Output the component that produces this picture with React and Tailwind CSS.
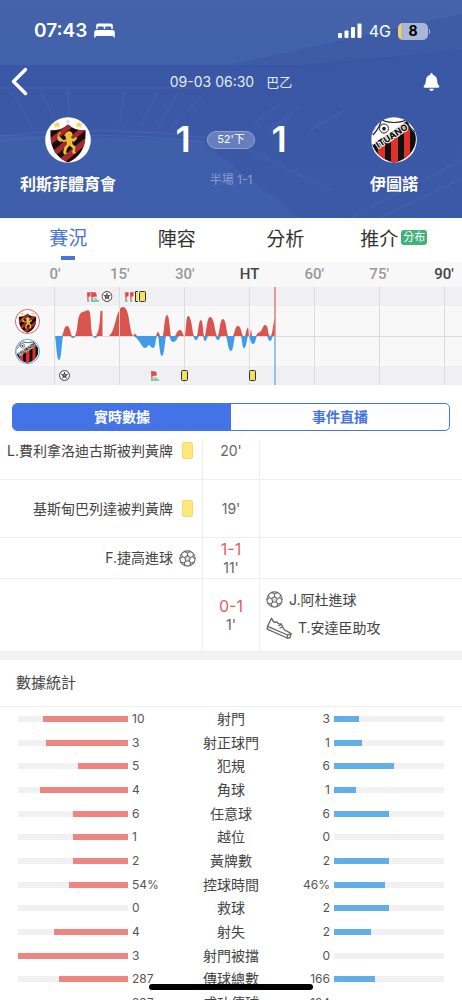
import React from "react";
import { FaBell } from "react-icons/fa";

const STATS = [
  ["10", "射門", "3", 77, 23],
  ["3", "射正球門", "1", 75, 25],
  ["5", "犯規", "6", 45.5, 54.5],
  ["4", "角球", "1", 80, 20],
  ["6", "任意球", "6", 50, 50],
  ["1", "越位", "0", 50, 0],
  ["2", "黃牌數", "2", 50, 50],
  ["54%", "控球時間", "46%", 54, 46],
  ["0", "救球", "2", 0, 50],
  ["4", "射失", "2", 67, 33.5],
  ["3", "射門被擋", "0", 100, 0],
  ["287", "傳球總數", "166", 63, 37],
  ["237", "成功傳球", "124", 65, 35],
];

// Each hump is [start, end, peak x, peak y] around the zero line at y = 49.
const HUMPS_HOME = [
  [8, 18, 13, 39], [79, 83, 81, 47], [102, 106, 104, 45],
  [109, 117, 113, 28], [121, 130, 126, 43], [131, 140, 134, 29],
  [143, 150, 147, 33], [151, 163, 156, 30], [164, 174, 169, 32],
  [179, 189, 184, 39], [191, 195, 194, 41], [196, 198, 197, 43],
];
const HUMPS_AWAY = [
  [1, 9, 5, 73], [16, 22, 19, 51], [39, 44, 41, 51],
  [104, 112, 108, 69], [115, 125, 119, 55], [139, 145, 142, 53],
  [149, 154, 151, 54], [161, 167, 164, 53], [172, 181, 177, 64],
  [187, 194, 190, 61], [195, 203, 199, 57], [213, 219, 216, 54],
];

function hump([a, b, p, y]) {
  const shoulder = 49 - (49 - y) * 0.3;
  return `M${a} 49C${a + (p - a) * 0.35} ${shoulder} ${p - (p - a) * 0.6} ${y} ${p} ${y}C${p + (b - p) * 0.6} ${y} ${b - (b - p) * 0.35} ${shoulder} ${b} 49Z`;
}

function Ball({ dark, ...props }) {
  return (
    <svg viewBox="0 0 24 24" fill="none" stroke={dark ? "#2c2c2c" : "#666"} strokeWidth={dark ? 2 : 1.5} strokeLinejoin="round" {...props}>
      <circle cx="12" cy="12" r="10.8" fill="#fff" />
      <path d="M12 7.8L16 10.7L14.5 15.4H9.5L8 10.7Z" fill={dark ? "#888" : "#ddd"} />
      <path d="M12 7.8V4.4M16 10.7L19.4 9.4M14.5 15.4L16.6 18.4M9.5 15.4L7.4 18.4M8 10.7L4.6 9.4" />
      {dark ? null : (
        <path d="M7.6 2.2L12 4.4L16.4 2.2M20.6 5.4L19.4 9.4L22.8 12.4M21.2 17.4L16.6 18.4L15.2 22.3M8.8 22.3L7.4 18.4L2.8 17.4M1.2 12.4L4.6 9.4L3.4 5.4" />
      )}
    </svg>
  );
}

function Shoe() {
  return (
    <svg viewBox="0 0 26 22" className="h-[22px] w-[26px] shrink-0" fill="none" stroke="#666" strokeWidth="1.3" strokeLinejoin="round" strokeLinecap="round">
      <path d="M5.4 1.2L1.6 9.3L1.2 12.2L21.2 21L24 20.8L25 16.8C22.6 14.2 19.6 14.4 17.6 11.8L15.2 6.8C13.6 7.2 11.8 6.8 11 5L8.2 5.4C6.8 4.6 6.6 2.6 5.4 1.2Z" />
      <path d="M1.6 9.3L21.6 18L25 16.8M21.6 18L21.2 21M15.4 7.6L12.8 8.6M16.6 10L14 11" />
    </svg>
  );
}

function Bed() {
  return (
    <svg viewBox="0 0 21 15" className="h-[15px] w-[21px]" fill="#fff" aria-hidden="true">
      <path d="M2.200 6V2.600C2.200 1.200 3 0.400 4.400 0.400H16.600C18 0.400 18.800 1.200 18.800 2.600V6H17.300V4.800C17.300 4 16.900 3.600 16.100 3.600H12.300C11.600 3.600 11.200 4 11.200 4.800V6H9.800V4.800C9.800 4 9.400 3.600 8.700 3.600H4.900C4.100 3.600 3.700 4 3.700 4.800V6Z" />
      <path d="M2.500 7H18.500C20 7 20.800 8 20.800 9.300V14C20.800 14.500 20.500 14.700 20.100 14.700C19.700 14.700 19.400 14.500 19.400 14V12.900H1.600V14C1.600 14.500 1.300 14.700 0.900 14.700C0.500 14.700 0.200 14.500 0.200 14V9.300C0.200 8 1 7 2.500 7Z" />
    </svg>
  );
}

function HomeCrest(props) {
  return (
    <svg viewBox="0 0 46 46" {...props}>
      <defs>
        <clipPath id="home-shield">
          <path d="M23 7.500C18 12 12 13.600 5.500 13.300C5 27 8 39 23 45.500C38 39 41 27 40.500 13.300C34 13.600 28 12 23 7.500Z" />
        </clipPath>
      </defs>
      <circle cx="23" cy="23" r="22.800" fill="#fff" />
      <g clipPath="url(#home-shield)">
        <path d="M0 0H46V46H0Z" fill="#1b0c0c" />
        <path d="M2 24L24 6L30 8L2 31ZM4 37L38 9L42 12L8 41ZM12 44L44 18V25L18 47Z" fill="#a52a2c" />
      </g>
      <g transform="translate(3.500 4) scale(0.860)">
        <path d="M21 13l3-1.500 3.500 2 .5 3-2 2.500 2.500 2 3.500-2.500 1.500 1.500-3.500 4-2.500-.5.500 3.500 3.500 3-1 5 1.500 2.500-3.500.5-1-2 1-4-4-3.500-3 3.500-1 4 1 2.500-3.500.500-1-3 1.500-5.500 3-3.500-.5-3.500-4 1-2.500-2.500-3.500 1-.5-2 3.500-2 3 3 3.500-.5-1-4-1.500-1Z" fill="#ecc03c" />
        <path d="M15 24C10 21 10 16 14 13M15 24L12 18" fill="none" stroke="#ecc03c" strokeWidth="1.500" />
      </g>
      <path d="M12 4l1 2.500 3 .2-2.300 1.800.8 2.500-2.500-1.500L9.500 11l.7-2.500L8 6.700l3-.2ZM34 4l1 2.500 3 .2-2.300 1.800.8 2.500-2.500-1.500-2.500 1.500.7-2.500L30 6.700l3-.2Z" fill="#ecdc50" />
      <path d="M23 1.500l1 2 2 .2-1.500 1.500.5 2-2-1-2 1 .5-2L20 3.700l2-.2Z" fill="#dcdfe6" />
    </svg>
  );
}

function AwayCrest(props) {
  return (
    <svg viewBox="0 0 46 46" {...props}>
      <defs>
        <clipPath id="away-shield">
          <path d="M3 13Q9 9 10 3Q23 8 36 3Q38 12 44 16C48 30 38 42 23 46C8 42 -2 30 1 18Z" />
        </clipPath>
        <clipPath id="away-disc"><circle cx="23" cy="23" r="22.800" /></clipPath>
      </defs>
      <circle cx="23" cy="23" r="22.800" fill="#fff" />
      <g clipPath="url(#away-disc)">
        <g clipPath="url(#away-shield)">
          <path d="M0 0H46V46H0Z" fill="#111" />
          <path d="M7 29L14 25V46H7ZM20 22L27 18V46H20ZM33 15L39 12V46H33Z" fill="#e03129" />
          <path d="M0 0H35L37 3L2 28L0 26Z" fill="#fff" />
        </g>
        <path d="M2 18Q10 9 10 3Q23 8 36 3Q37 10 44 15" fill="none" stroke="#222" strokeWidth="1.200" />
        <circle cx="13" cy="11.500" r="4.500" fill="#fff" stroke="#222" strokeWidth="1" />
        <path d="M13 9.500l2 1.500-.8 2.500h-2.400L11 11Z" fill="#222" />
        <text x="21" y="22" transform="rotate(-33 21 19)" textAnchor="middle" fontFamily="Inter, sans-serif" fontWeight="800" fontSize="9" fill="#111" stroke="#fff" strokeWidth="2" paintOrder="stroke">ITUANO</text>
      </g>
    </svg>
  );
}

function Flag({ x, y, half }) {
  return (
    <g transform={`translate(${x} ${y})`}>
      <path d={half ? "M0 0.500L3.500 0V4L1.500 5V9H0.500Z" : "M0 0L5 0.500L6 4.500L1.500 5V9H0.500Z"} fill="#dc4a4a" />
      <path d={half ? "M0 9H2.500" : "M0 9H8M2.500 6.500L6 7.500"} stroke="#62bd8c" strokeWidth="1.300" />
    </g>
  );
}

function ChartCard({ x, y }) {
  return <rect x={x} y={y} width="6" height="10" rx="1" fill="#f3e25b" stroke="#333" />;
}

function MomentumChart() {
  return (
    <svg viewBox="0 0 408 98" className="min-w-0 flex-1" role="img" aria-label="Momentum">
      <path d="M0.500 0V98M65.500 0V98M130.500 0V98M195.500 0V98M260.500 0V98M325.500 0V98M390.500 0V98M0 49.500H408" stroke="#dcdcde" />
      <g fill="#d9544d">
        {HUMPS_HOME.map((h) => <path key={h[0]} d={hump(h)} />)}
        <path d="M21 49C24 44 23 31 26 27C28 24 31 25 34 23C38 23 36 44 39 49Z" />
        <path d="M42 49C46 43 46 30 46.500 24L48.500 24V49Z" />
        <path d="M55 49C62 44 62 20 69 20C76 20 75 44 79 49Z" />
        <path d="M202 49C204 44 207 46 208 42C210 38 210 38 211 38C215 38 213 47 216 49Z" />
        <path d="M217 49C219 45 219 36 221 30V49Z" />
      </g>
      <g fill="#429be9">
        {HUMPS_AWAY.map((h) => <path key={h[0]} d={hump(h)} />)}
        <path d="M80 49C86 53 88 61 91 61C93 61 94 58 95 58C96 58 97 61 99 61C102 61 101 53 103 49Z" />
      </g>
      <path d="M65.500 20V49" stroke="#f5d4d2" />
      <path d="M221 0V49" stroke="#df7c7e" strokeWidth="1.500" />
      <path d="M221 49V98" stroke="#74b4e8" strokeWidth="1.500" />
      <Flag x={33} y={5} half />
      <Flag x={37} y={5} />
      <Ball dark x="47.500" y="4" width="11" height="11" />
      <Flag x={71} y={5} half />
      <Flag x={76} y={5} half />
      <path d="M84 4.500H81.500V14.500H84" fill="#f3e25b" stroke="#333" />
      <ChartCard x={85.5} y={4.5} />
      <Ball dark x="5" y="83" width="11" height="11" />
      <Flag x={97} y={84} />
      <ChartCard x={127.5} y={83.5} />
      <ChartCard x={195.5} y={83.5} />
    </svg>
  );
}

function StadiumBackdrop() {
  return (
    <svg viewBox="0 0 462 218" preserveAspectRatio="none" className="absolute inset-0 h-full w-full" aria-hidden="true">
      <defs>
        <linearGradient id="sky" x1="0" y1="0" x2="0" y2="1">
          <stop offset="0" stopColor="#4463a9" />
          <stop offset="0.300" stopColor="#4161ab" />
          <stop offset="1" stopColor="#3e5dab" />
        </linearGradient>
        <linearGradient id="stand" x1="0" y1="0" x2="0" y2="1">
          <stop offset="0" stopColor="#3450a0" stopOpacity="0.600" />
          <stop offset="1" stopColor="#3450a0" stopOpacity="0.300" />
        </linearGradient>
      </defs>
      <path d="M0 0H462V218H0Z" fill="url(#sky)" />
      <path d="M0 65H300L462 50V218H300L200 140L0 135Z" fill="url(#stand)" />
      <path d="M230 65L462 14V50L300 68Z" fill="#3954a2" opacity="0.500" />
      <g fill="none" stroke="#6b85c4" opacity="0.250">
        <path d="M0 88H200M12 92L32 126M40 92L55 120M68 88L70 124M124 90L120 124M158 92L140 126M178 92L158 128M205 92L170 130" />
        <path d="M0 136Q100 124 210 138M0 141Q100 129 215 143" />
        <path d="M255 122L280 104M268 130L300 108M310 130L345 110M250 150L330 190M350 218L462 160M380 218L462 178" />
      </g>
    </svg>
  );
}

function Team({ crest, name }) {
  return (
    <div className="flex flex-col items-center">
      {crest}
      <h2 className="mt-[9px] text-base leading-6 font-bold whitespace-nowrap">{name}</h2>
    </div>
  );
}

function YellowCard() {
  return <span className="mx-[3px] h-[17px] w-[11px] shrink-0 rounded-[2px] border border-[#f0dc70] bg-[#fbe877]" />;
}

function EventRow({ height, home, score, minute, away }) {
  return (
    <li className={`grid grid-cols-[1fr_58px_1fr] border-b border-[#eeeeee] ${height}`}>
      <div className="flex items-center justify-end gap-[6px] pr-[6px] whitespace-nowrap">{home}</div>
      <div className="flex flex-col items-center justify-center border-x border-[#eeeeee] text-[#666]">
        {score && <span className="text-base leading-5 text-[#e0625c]">{score}</span>}
        <span className="leading-[18px]">{minute}</span>
      </div>
      <div className="flex flex-col justify-center pb-[3px] pl-[6px]">{away}</div>
    </li>
  );
}

export default function App() {
  return (
    <div className="flex h-dvh flex-col overflow-hidden bg-white font-['Inter','Noto_Sans_CJK_TC',sans-serif] text-sm text-[#444]">
      <header className="relative shrink-0 bg-[#3f5eaa] text-white">
        <StadiumBackdrop />
        <div className="relative pb-[22px]">
          <div className="flex h-[62px] items-center justify-between pr-[32px] pl-[34px]">
            <div className="flex items-center gap-[7px]">
              <span className="text-[19px] font-semibold">07:43</span>
              <Bed />
            </div>
            <div className="flex items-center gap-[7px]">
              <svg viewBox="0 0 24 16" className="h-4 w-6" fill="#fff" aria-hidden="true">
                <rect x="0" y="10" width="4" height="5" rx="1" />
                <rect x="6.500" y="7.500" width="4" height="7.500" rx="1" />
                <rect x="13" y="4" width="4" height="11" rx="1" />
                <rect x="19.500" y="0.500" width="4" height="14.500" rx="1" />
              </svg>
              <span className="text-base">4G</span>
              <span className="flex items-center gap-px">
                <span className="flex h-[17px] w-[30px] items-center justify-center overflow-hidden rounded-[5px] border-l-3 border-[#f2d35e] bg-[#a9b6d8] pr-[3px] text-sm font-bold text-black">8</span>
                <span className="h-[5px] w-px rounded-r bg-[#a9b6d8]" />
              </span>
            </div>
          </div>
          <div className="flex h-[40px] items-center justify-between pr-[22px] pl-[10px]">
            <button type="button" aria-label="Back" className="w-[35px]">
              <svg viewBox="0 0 18 30" className="h-[30px] w-[18px]" fill="none" stroke="#fff" strokeWidth="3.500" strokeLinecap="round" strokeLinejoin="round">
                <path d="M15.500 2.500L3.500 14.500L15.500 26.500" />
              </svg>
            </button>
            <p className="flex items-center gap-3 pl-[10px] text-sm text-[#e6ebf7]"><span>09-03 06:30</span><span className="text-[13px]">巴乙</span></p>
            <button type="button" aria-label="Notifications" className="flex w-[33px] justify-end">
              <FaBell className="h-[18px] w-[17px]" />
            </button>
          </div>
          <div className="grid grid-cols-[136px_1fr_136px] pt-[15px]">
            <Team crest={<HomeCrest className="h-[46px] w-[46px]" />} name="利斯菲體育會" />
            <div className="flex flex-col items-center">
              <div className="flex h-[46px] items-center gap-[14px] text-[36px] font-semibold">
                <span className="w-[20px] text-center">1</span>
                <span className="flex h-[18px] w-[48px] items-center justify-center rounded-full border border-[#91a2d0] bg-[#6780bd] text-[11px] font-normal">52'下</span>
                <span className="w-[20px] text-center">1</span>
              </div>
              <p className="mt-[7px] text-xs leading-5 text-[#8a9ccd]">半場 1-1</p>
            </div>
            <Team crest={<AwayCrest className="h-[46px] w-[46px]" />} name="伊圖諾" />
          </div>
        </div>
      </header>

      <nav className="grid h-[44px] shrink-0 grid-cols-4 px-[14px] text-[19px] text-[#333]">
        <a href="#live" className="flex flex-col items-center justify-end gap-[3px] pb-[2px] text-[#4a72e0]">
          <span className="leading-[28px]">賽況</span>
          <span className="h-[4px] w-[14px] bg-[#4a72e0]" />
        </a>
        <a href="#lineup" className="flex items-center justify-center pb-px">陣容</a>
        <a href="#analysis" className="flex items-center justify-center pb-px">分析</a>
        <a href="#tips" className="flex items-center justify-center gap-[3px] pb-px">
          推介
          <span className="mb-1 rounded-[3px] bg-[#45b07c] px-[2px] text-[11px] leading-[15px] text-white">分布</span>
        </a>
      </nav>

      <section className="shrink-0 bg-[#f8f8f9]">
        <div className="flex h-[25px] items-center justify-between pr-[18px] pl-[55px] font-['Roboto',sans-serif] text-[15px] font-medium text-[#999]">
          {["0'", "15'", "30'", "HT", "60'", "75'", "90'"].map((t) => (
            <span key={t} className={`flex w-0 justify-center ${t === "HT" || t === "90'" ? "text-[#444]" : ""}`}>{t}</span>
          ))}
        </div>
        <div className="flex bg-[linear-gradient(#f0f0f2_0_19px,#f8f8f9_19px_79px,#f0f0f2_79px)]">
          <div className="flex w-[54px] flex-col items-center justify-center gap-[5px]">
            <HomeCrest className="h-[25px] w-[25px] rounded-full border border-[#d9544d]" />
            <AwayCrest className="h-[25px] w-[25px] rounded-full border border-[#429be9]" />
          </div>
          <MomentumChart />
        </div>
      </section>

      <div className="mx-3 mt-[18px] mb-[9px] grid h-[28px] shrink-0 grid-cols-2 overflow-hidden rounded-[5px] border border-[#4473e3] font-semibold">
        <button type="button" className="bg-[#4473e8] text-white">實時數據</button>
        <button type="button" className="text-[#4473e3]">事件直播</button>
      </div>

      <section className="shrink-0 overflow-hidden">
        <ul className="-mt-[18px]">
          <EventRow height="h-[58px]" minute="20'" home={<><span>L.費利拿洛迪古斯被判黃牌</span><YellowCard /></>} />
          <EventRow height="h-[58px]" minute="19'" home={<><span>基斯甸巴列達被判黃牌</span><YellowCard /></>} />
          <EventRow height="h-[41px]" score="1-1" minute="11'" home={<><span>F.捷高進球</span><Ball className="h-[17px] w-[17px]" /></>} />
          <EventRow
            height="h-[73px]"
            score="0-1"
            minute="1'"
            away={
              <>
                <p className="flex h-[28px] items-center gap-[6px]"><Ball className="h-[17px] w-[17px]" />J.阿杜進球</p>
                <p className="flex h-[28px] items-center gap-[6px]"><Shoe />T.安達臣助攻</p>
              </>
            }
          />
        </ul>
      </section>

      <section className="shrink-0 border-t-8 border-[#f2f2f3]">
        <h3 className="flex h-[47px] items-center border-b border-[#eeeeee] pl-[16px] text-[15px]">數據統計</h3>
        <table className="block">
          <tbody className="grid h-77 auto-rows-fr">
            {STATS.map(([home, label, away, homePct, awayPct]) => (
              <tr key={label} className="grid grid-cols-[1fr_206px_1fr] items-center px-[18px]">
                <td className="flex h-[6px] justify-end bg-[#f1f1f1] p-0">
                  <span className="bg-[#ed8680]" style={{ width: `${homePct}%` }} />
                </td>
                <th scope="row" className="grid grid-cols-[40px_1fr_40px] items-center px-1 text-xs leading-5 font-normal text-[#555]">
                  <span className="text-left">{home}</span>
                  <span className="text-center text-sm leading-5 text-[#444]">{label}</span>
                  <span className="text-right">{away}</span>
                </th>
                <td className="flex h-[6px] bg-[#f1f1f1] p-0">
                  <span className="bg-[#62aee6]" style={{ width: `${awayPct}%` }} />
                </td>
              </tr>
            ))}
          </tbody>
        </table>
      </section>
      <div className="fixed bottom-[10px] left-1/2 h-[6px] w-[164px] -translate-x-1/2 rounded-full bg-black" />
    </div>
  );
}
